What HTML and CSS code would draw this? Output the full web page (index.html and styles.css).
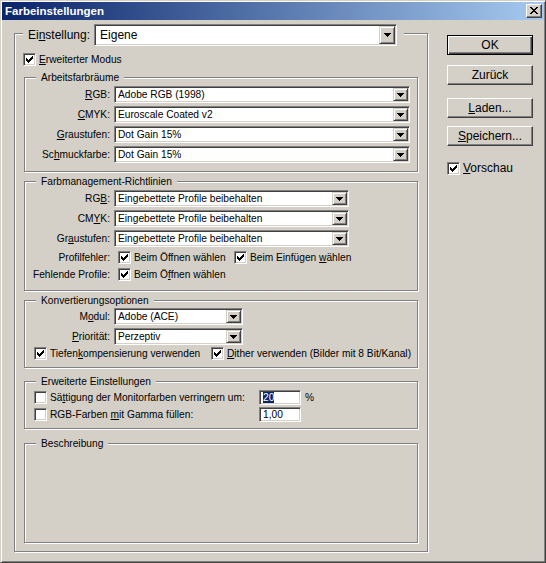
FILE: index.html
```html
<!DOCTYPE html>
<html lang="de">
<head>
<meta charset="utf-8">
<title>Farbeinstellungen</title>
<link rel="stylesheet" href="styles.css">
</head>
<body>
<div class="window">
  <div class="titlebar">
    <span class="title">Farbeinstellungen</span>
    <span class="close"><svg width="8" height="7" viewBox="0 0 8 7" shape-rendering="crispEdges"><path d="M0 0h2v1H0z M6 0h2v1H6z M1 1h2v1H1z M5 1h2v1H5z M2 2h4v1H2z M3 3h2v1H3z M2 4h4v1H2z M1 5h2v1H1z M5 5h2v1H5z M0 6h2v1H0z M6 6h2v1H6z" fill="#000"/></svg></span>
  </div>
  <div class="content">
    <div class="group outer">
      <div class="outer-head">
        <span class="big-label">Ei<u>n</u>stellung:</span>
        <div class="combo combo-big"><span class="combo-text">Eigene</span><span class="drop"><svg width="7" height="4" viewBox="0 0 7 4" shape-rendering="crispEdges"><path d="M0 0h7v1h-1v1h-1v1h-1v1h-1v-1h-1v-1h-1v-1h-1z" fill="#000"/></svg></span></div>
      </div>
      <div class="check-line mode">
        <span class="cb"><svg width="7" height="7" viewBox="0 0 7 7" shape-rendering="crispEdges"><path d="M0 2h1v3H0z M1 3h1v3H1z M2 4h1v3H2z M3 3h1v3H3z M4 2h1v3H4z M5 1h1v3H5z M6 0h1v3H6z" fill="#000"/></svg></span>
        <span class="cl-text"><u>E</u>rweiterter Modus</span>
      </div>

      <div class="group g-work">
        <div class="group-title">Arbeitsfarbräume</div>
        <div class="form">
          <span class="lbl"><u>R</u>GB:</span>
          <div class="combo w-wide"><span class="combo-text">Adobe RGB (1998)</span><span class="drop"><svg width="7" height="4" viewBox="0 0 7 4" shape-rendering="crispEdges"><path d="M0 0h7v1h-1v1h-1v1h-1v1h-1v-1h-1v-1h-1v-1h-1z" fill="#000"/></svg></span></div>
          <span class="lbl"><u>C</u>MYK:</span>
          <div class="combo w-wide"><span class="combo-text">Euroscale Coated v2</span><span class="drop"><svg width="7" height="4" viewBox="0 0 7 4" shape-rendering="crispEdges"><path d="M0 0h7v1h-1v1h-1v1h-1v1h-1v-1h-1v-1h-1v-1h-1z" fill="#000"/></svg></span></div>
          <span class="lbl"><u>G</u>raustufen:</span>
          <div class="combo w-wide"><span class="combo-text">Dot Gain 15%</span><span class="drop"><svg width="7" height="4" viewBox="0 0 7 4" shape-rendering="crispEdges"><path d="M0 0h7v1h-1v1h-1v1h-1v1h-1v-1h-1v-1h-1v-1h-1z" fill="#000"/></svg></span></div>
          <span class="lbl">Sc<u>h</u>muckfarbe:</span>
          <div class="combo w-wide"><span class="combo-text">Dot Gain 15%</span><span class="drop"><svg width="7" height="4" viewBox="0 0 7 4" shape-rendering="crispEdges"><path d="M0 0h7v1h-1v1h-1v1h-1v1h-1v-1h-1v-1h-1v-1h-1z" fill="#000"/></svg></span></div>
        </div>
      </div>

      <div class="group g-policy">
        <div class="group-title">Farbmanagement-Richtlinien</div>
        <div class="form form-policy">
          <span class="lbl">RG<u>B</u>:</span>
          <div class="combo w-mid"><span class="combo-text">Eingebettete Profile beibehalten</span><span class="drop"><svg width="7" height="4" viewBox="0 0 7 4" shape-rendering="crispEdges"><path d="M0 0h7v1h-1v1h-1v1h-1v1h-1v-1h-1v-1h-1v-1h-1z" fill="#000"/></svg></span></div>
          <span class="lbl">CM<u>Y</u>K:</span>
          <div class="combo w-mid"><span class="combo-text">Eingebettete Profile beibehalten</span><span class="drop"><svg width="7" height="4" viewBox="0 0 7 4" shape-rendering="crispEdges"><path d="M0 0h7v1h-1v1h-1v1h-1v1h-1v-1h-1v-1h-1v-1h-1z" fill="#000"/></svg></span></div>
          <span class="lbl">Gr<u>a</u>ustufen:</span>
          <div class="combo w-mid"><span class="combo-text">Eingebettete Profile beibehalten</span><span class="drop"><svg width="7" height="4" viewBox="0 0 7 4" shape-rendering="crispEdges"><path d="M0 0h7v1h-1v1h-1v1h-1v1h-1v-1h-1v-1h-1v-1h-1z" fill="#000"/></svg></span></div>
          <span class="lbl">Profilfehler:</span>
          <div class="checks">
            <div class="check-line pair-a">
              <span class="cb"><svg width="7" height="7" viewBox="0 0 7 7" shape-rendering="crispEdges"><path d="M0 2h1v3H0z M1 3h1v3H1z M2 4h1v3H2z M3 3h1v3H3z M4 2h1v3H4z M5 1h1v3H5z M6 0h1v3H6z" fill="#000"/></svg></span>
              <span class="cl-text">Beim Öffnen wählen</span>
            </div>
            <div class="check-line">
              <span class="cb"><svg width="7" height="7" viewBox="0 0 7 7" shape-rendering="crispEdges"><path d="M0 2h1v3H0z M1 3h1v3H1z M2 4h1v3H2z M3 3h1v3H3z M4 2h1v3H4z M5 1h1v3H5z M6 0h1v3H6z" fill="#000"/></svg></span>
              <span class="cl-text">Beim Einfügen <u>w</u>ählen</span>
            </div>
          </div>
          <span class="lbl">Fehlende Profile:</span>
          <div class="checks">
            <div class="check-line pair-a">
              <span class="cb"><svg width="7" height="7" viewBox="0 0 7 7" shape-rendering="crispEdges"><path d="M0 2h1v3H0z M1 3h1v3H1z M2 4h1v3H2z M3 3h1v3H3z M4 2h1v3H4z M5 1h1v3H5z M6 0h1v3H6z" fill="#000"/></svg></span>
              <span class="cl-text">Beim Ö<u>f</u>fnen wählen</span>
            </div>
          </div>
        </div>
      </div>

      <div class="group g-conv">
        <div class="group-title">Konvertierungsoptionen</div>
        <div class="form">
          <span class="lbl">M<u>o</u>dul:</span>
          <div class="combo w-small"><span class="combo-text">Adobe (ACE)</span><span class="drop"><svg width="7" height="4" viewBox="0 0 7 4" shape-rendering="crispEdges"><path d="M0 0h7v1h-1v1h-1v1h-1v1h-1v-1h-1v-1h-1v-1h-1z" fill="#000"/></svg></span></div>
          <span class="lbl"><u>P</u>riorität:</span>
          <div class="combo w-small"><span class="combo-text">Perzeptiv</span><span class="drop"><svg width="7" height="4" viewBox="0 0 7 4" shape-rendering="crispEdges"><path d="M0 0h7v1h-1v1h-1v1h-1v1h-1v-1h-1v-1h-1v-1h-1z" fill="#000"/></svg></span></div>
        </div>
        <div class="checks conv-checks">
          <div class="check-line pair-b">
            <span class="cb"><svg width="7" height="7" viewBox="0 0 7 7" shape-rendering="crispEdges"><path d="M0 2h1v3H0z M1 3h1v3H1z M2 4h1v3H2z M3 3h1v3H3z M4 2h1v3H4z M5 1h1v3H5z M6 0h1v3H6z" fill="#000"/></svg></span>
            <span class="cl-text">Tiefen<u>k</u>ompensierung verwenden</span>
          </div>
          <div class="check-line">
            <span class="cb"><svg width="7" height="7" viewBox="0 0 7 7" shape-rendering="crispEdges"><path d="M0 2h1v3H0z M1 3h1v3H1z M2 4h1v3H2z M3 3h1v3H3z M4 2h1v3H4z M5 1h1v3H5z M6 0h1v3H6z" fill="#000"/></svg></span>
            <span class="cl-text"><u>D</u>ither verwenden (Bilder mit 8 Bit/Kanal)</span>
          </div>
        </div>
      </div>

      <div class="group g-adv">
        <div class="group-title">Erweiterte Einstellungen</div>
        <div class="adv-rows">
          <div class="adv-row">
            <div class="check-line pair-c">
              <span class="cb"></span>
              <span class="cl-text">Sä<u>t</u>tigung der Monitorfarben verringern um:</span>
            </div>
            <span class="field"><span class="sel">20</span></span>
            <span class="unit">%</span>
          </div>
          <div class="adv-row">
            <div class="check-line pair-c">
              <span class="cb"></span>
              <span class="cl-text">RGB-Farben <u>m</u>it Gamma füllen:</span>
            </div>
            <span class="field">1,00</span>
          </div>
        </div>
      </div>

      <div class="group g-desc">
        <div class="group-title">Beschreibung</div>
      </div>
    </div>

    <div class="buttons">
      <div class="btn default">OK</div>
      <div class="btn b-back">Zurück</div>
      <div class="btn b-load"><u>L</u>aden...</div>
      <div class="btn b-save"><u>S</u>peichern...</div>
      <div class="check-line preview">
        <span class="cb"><svg width="7" height="7" viewBox="0 0 7 7" shape-rendering="crispEdges"><path d="M0 2h1v3H0z M1 3h1v3H1z M2 4h1v3H2z M3 3h1v3H3z M4 2h1v3H4z M5 1h1v3H5z M6 0h1v3H6z" fill="#000"/></svg></span>
        <span class="cl-text big-text"><u>V</u>orschau</span>
      </div>
    </div>
  </div>
</div>
</body>
</html>
```
FILE: styles.css
```css
* { box-sizing: border-box; }
html, body { margin: 0; padding: 0; }
body {
  width: 546px;
  height: 563px;
  overflow: hidden;
  background: #D4D0C8;
  font-family: "Liberation Sans", Arial, sans-serif;
  font-size: 10.2px;
  color: #000;
}
u { text-decoration: underline; text-underline-offset: 1px; }

.window {
  width: 546px;
  height: 563px;
  background: #D4D0C8;
  border: 1px solid;
  border-color: #D4D0C8 #404040 #404040 #D4D0C8;
  box-shadow: inset 1px 1px 0 #fff, inset -1px -1px 0 #808080;
  padding: 1px;
}

.titlebar {
  height: 18px;
  display: flex;
  align-items: center;
  justify-content: space-between;
  padding: 0 2px 0 3px;
  background: linear-gradient(to right, #0A246A, #A6CAF0);
}
.title {
  color: #fff;
  font-weight: bold;
  font-size: 11.5px;
  line-height: 14px;
  white-space: nowrap;
}
.close {
  width: 16px;
  height: 14px;
  display: flex;
  align-items: center;
  justify-content: center;
  padding: 0 0 1px 0;
  background: #D4D0C8;
  border: 1px solid;
  border-color: #fff #404040 #404040 #fff;
  box-shadow: inset -1px -1px 0 #808080;
}
.close svg { display: block; }

.content {
  display: flex;
  align-items: flex-start;
  padding-left: 12px;
}

/* etched group boxes */
.group {
  display: flex;
  flex-direction: column;
  border: 1px solid #808080;
  box-shadow: 1px 1px 0 #fff, inset 1px 1px 0 #fff;
}
.group-title {
  align-self: flex-start;
  margin: -7px 0 0 11px;
  padding: 0 5px;
  line-height: 13px;
  background: #D4D0C8;
  white-space: nowrap;
}

.outer {
  width: 414px;
  margin-top: 13px;
  padding-bottom: 8px;
}
.outer-head {
  align-self: flex-start;
  display: flex;
  align-items: center;
  gap: 4px;
  height: 22px;
  margin: -10px 0 0 8px;
  padding: 0 7px 0 5px;
  background: #D4D0C8;
}
.big-label, .big-text { font-size: 12px; }
.big-label { line-height: 14px; white-space: nowrap; }

.check-line {
  display: flex;
  align-items: center;
  gap: 3px;
  height: 13px;
  white-space: nowrap;
}
.cl-text { line-height: 13px; }
.mode { margin: 7px 0 0 8px; }

.cb {
  width: 13px;
  height: 13px;
  flex: none;
  background: #fff;
  border: 1px solid;
  border-color: #808080 #fff #fff #808080;
  box-shadow: inset 1px 1px 0 #404040, inset -1px -1px 0 #D4D0C8;
  padding: 2px;
}
.cb svg { display: block; }

/* combo boxes */
.combo {
  display: flex;
  align-items: stretch;
  height: 17px;
  background: #fff;
  border: 1px solid;
  border-color: #808080 #fff #fff #808080;
  box-shadow: inset 1px 1px 0 #404040, inset -1px -1px 0 #D4D0C8;
  padding: 1px;
}
.combo-text {
  flex: 1;
  min-width: 0;
  padding-left: 2px;
  line-height: 13px;
  white-space: nowrap;
  overflow: hidden;
}
.drop {
  width: 15px;
  flex: none;
  display: flex;
  align-items: center;
  justify-content: center;
  background: #D4D0C8;
  border: 1px solid;
  border-color: #D4D0C8 #404040 #404040 #D4D0C8;
  box-shadow: inset 1px 1px 0 #fff, inset -1px -1px 0 #808080;
}
.drop svg { display: block; }
.combo-big {
  width: 303px;
  height: 22px;
}
.combo-big .combo-text {
  font-size: 12px;
  line-height: 18px;
  padding-left: 4px;
}
.combo-big .drop { width: 16px; }

.w-wide { width: 296px; }
.w-mid { width: 235px; }
.w-small { width: 129px; }

.form {
  display: grid;
  grid-template-columns: 85px auto;
  column-gap: 4px;
  row-gap: 3px;
  align-items: center;
  justify-items: start;
  margin-top: 2px;
}
.lbl {
  justify-self: end;
  line-height: 13px;
  white-space: nowrap;
}

.g-work {
  width: 394px;
  margin: 11px 0 0 9px;
  padding-bottom: 8px;
}
.g-policy {
  width: 394px;
  margin: 9px 0 0 9px;
  padding-bottom: 9px;
}
.form-policy { grid-template-rows: 17px 17px 17px 14px 14px; }
.checks {
  display: flex;
  align-items: center;
  margin-left: 4px;
}
.pair-a { width: 116px; }

.g-conv {
  width: 394px;
  margin: 9px 0 0 9px;
  padding-bottom: 7px;
}
.g-conv .form { margin-top: 1px; }
.conv-checks { margin: 2px 0 0 9px; }
.pair-b { width: 177px; }

.g-adv {
  width: 394px;
  margin: 13px 0 0 9px;
  padding-bottom: 6px;
}
.adv-rows {
  display: flex;
  flex-direction: column;
  gap: 2px;
  margin: 2px 0 0 9px;
}
.adv-row {
  display: flex;
  align-items: center;
  height: 15px;
}
.pair-c { width: 225px; }
.field {
  width: 42px;
  height: 15px;
  background: #fff;
  border: 1px solid;
  border-color: #808080 #fff #fff #808080;
  box-shadow: inset 1px 1px 0 #404040, inset -1px -1px 0 #D4D0C8;
  padding: 1px 0 0 3px;
  line-height: 11px;
  white-space: nowrap;
}
.sel { background: #0A246A; color: #fff; }
.unit { margin-left: 4px; line-height: 13px; }

.g-desc {
  width: 394px;
  height: 100px;
  margin: 14px 0 0 9px;
}

/* buttons column */
.buttons {
  display: flex;
  flex-direction: column;
  margin: 15px 0 0 19px;
}
.btn {
  width: 86px;
  height: 20px;
  display: flex;
  align-items: center;
  justify-content: center;
  background: #D4D0C8;
  border: 1px solid;
  border-color: #fff #404040 #404040 #fff;
  box-shadow: inset -1px -1px 0 #808080;
  font-size: 12px;
  line-height: 14px;
  white-space: nowrap;
}
.btn.default {
  border-color: #000;
  box-shadow: inset 1px 1px 0 #fff, inset -1px -1px 0 #404040, inset -2px -2px 0 #808080;
}
.b-back { margin-top: 10px; }
.b-load { margin-top: 13px; }
.b-save { margin-top: 8px; }
.preview { margin-top: 16px; gap: 3px; }
```
